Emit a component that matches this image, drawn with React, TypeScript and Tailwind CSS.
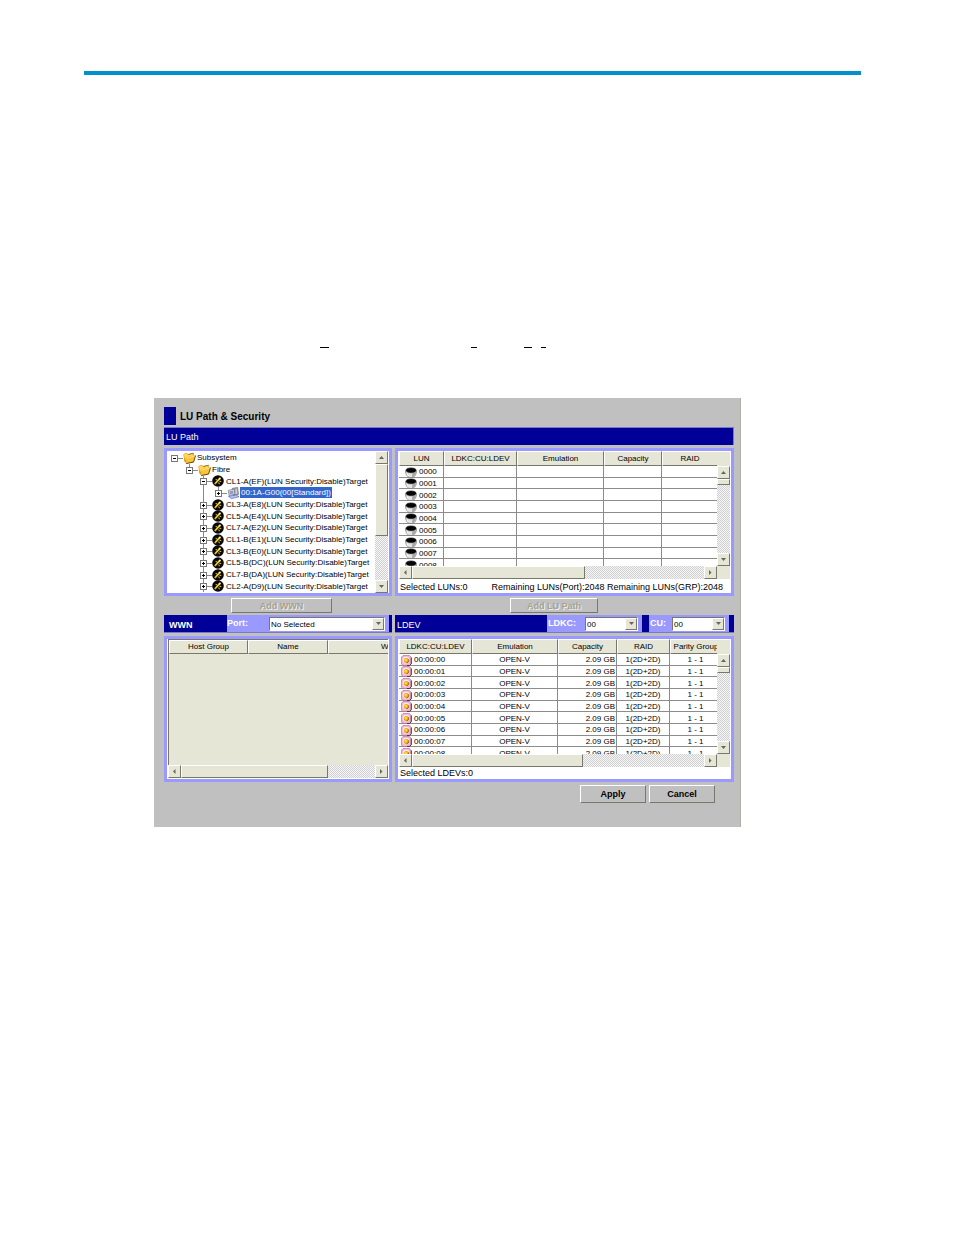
import React from 'react';
import clsx from 'clsx';

type IconKind = 'folder' | 'port' | 'host';

interface TreeNode {
  label: string;
  level: number;
  icon: IconKind;
  open?: boolean;
  selected?: boolean;
}

const ports = ['CL3-A(E8)', 'CL5-A(E4)', 'CL7-A(E2)', 'CL1-B(E1)', 'CL3-B(E0)', 'CL5-B(DC)', 'CL7-B(DA)', 'CL2-A(D9)'];

const tree: TreeNode[] = [
  { label: 'Subsystem', level: 0, icon: 'folder', open: true },
  { label: 'Fibre', level: 1, icon: 'folder', open: true },
  { label: 'CL1-A(EF)(LUN Security:Disable)Target', level: 2, icon: 'port', open: true },
  { label: '00:1A-G00(00[Standard])', level: 3, icon: 'host', selected: true },
  ...ports.map((port): TreeNode => ({
    label: `${port}(LUN Security:Disable)Target`,
    level: 2,
    icon: 'port',
  })),
];

const luns = ['0000', '0001', '0002', '0003', '0004', '0005', '0006', '0007', '0008'];
const ldevs = luns.map((lun) => `00:00:${lun.slice(2)}`);

const indents = ['pl-[3px]', 'pl-[18px]', 'pl-[32px]', 'pl-[47px]'];

const raised = 'border border-t-white border-l-white border-r-[#77776b] border-b-[#77776b] bg-[#e6e6d6]';
const checker = 'bg-[conic-gradient(#d0d0d0_25%,#f6f6f6_0_50%,#d0d0d0_0_75%,#f6f6f6_0)] bg-[length:2px_2px]';
const th = 'border border-t-white border-l-white border-r-[#77776b] border-b-[#77776b] bg-[#e6e6d6] p-0 text-center font-normal leading-[10px] whitespace-nowrap';
const td = 'border-r border-b border-[#8c8c8c] px-0 pt-[2px] pb-0 leading-[8px] whitespace-nowrap';

function FolderIcon() {
  return (
    <svg width="13" height="12" viewBox="0 0 13 12" className="shrink-0 overflow-visible">
      <path d="M.4 2.2 3.6.8l1.6 1.4L10.6.9l.9 3-1 6.6-7.3 1.1L1.2 9z" fill="#d99a1c" />
      <path d="M.8 2.6 3.6 1.4l1.5 1.4 5-1.2.5 1.8-7.4 2-1 3z" fill="#ffd65a" />
      <path d="m3 5.8 9.4-2.5-1.9 6.5-7.2 1.6z" fill="#f9c437" />
      <path d="m3.4 6.2 8.2-2.2" stroke="#fff0a0" strokeWidth=".8" />
      <path d="m3.2 11.6 7.4-1.6 2-6.5" fill="none" stroke="#5a3a04" strokeWidth=".9" />
      <path d="M5.2 2.5 10.5 1.2" stroke="#6b4706" strokeWidth=".7" />
    </svg>
  );
}

function PortIcon() {
  return (
    <svg width="12" height="12" viewBox="0 0 12 12" className="shrink-0 overflow-visible">
      <circle cx="6" cy="6" r="5.8" fill="#080808" />
      <path d="m3 8.8 4.6-5.2" stroke="#f3d12c" strokeWidth="1.7" fill="none" />
      <path d="m7.4 6.2 1.8.3M6.8 7.4l.5 1.8M3.6 4.4l1.3.4" stroke="#f3d12c" strokeWidth="1" fill="none" />
      <circle cx="7.9" cy="3.4" r="1" fill="#fff4b4" />
      <circle cx="3.3" cy="8.6" r=".8" fill="#e4a91c" />
    </svg>
  );
}

function HostIcon() {
  return (
    <svg width="13" height="12" viewBox="0 0 13 12" className="shrink-0 overflow-visible">
      <path d="M5.2 1.4 10.6.4l.9 7-4.6 1.4z" fill="#a7a9b4" stroke="#5b5d6a" strokeWidth=".6" />
      <path d="m1.2 3.4 6-1.3.7 5.2-5.8 1.1z" fill="#e3e5ee" stroke="#5b5d6a" strokeWidth=".6" />
      <path d="m2.3 4.3 4-.8.4 3-3.8.7z" fill="#8f9ccb" />
      <path d="m1.4 9.3 8-1.4 2.6 1.9-7.6 1.8z" fill="#b9c3ea" stroke="#3c55b4" strokeWidth=".6" />
      <path d="M9.2 2.4v4.4" stroke="#fff" strokeWidth=".7" />
    </svg>
  );
}

function LunIcon() {
  return (
    <svg width="12" height="11" viewBox="0 0 12 11" className="-my-[2px] shrink-0">
      <path d="M.5 3.4c0 4 1.8 7.2 5.5 7.2s5.5-3.2 5.5-7.2z" fill="#e4e4e4" stroke="#6a6a6a" strokeWidth=".7" />
      <path d="M7.4 6.2 7 10.3c2.4-.5 3.8-2.9 4-5.8z" fill="#a6a6a6" />
      <ellipse cx="6" cy="3.3" rx="5.6" ry="3" fill="#8f8f8f" />
      <ellipse cx="6.1" cy="3.3" rx="4.9" ry="2.4" fill="#050505" />
      <path d="M2 6.6c.4 1.3 1 2.2 1.8 2.8" fill="none" stroke="#fff" strokeWidth=".9" />
    </svg>
  );
}

function LdevIcon() {
  return (
    <svg width="11" height="11" viewBox="0 0 11 11" className="-my-[2px] shrink-0">
      <path d="M2 .5h6.4l1.8 1.8v6.6l-1.8 1.7H2L.5 9V2z" fill="#f0b6d0" stroke="#a06a8a" strokeWidth=".6" />
      <path d="M10.3 2.6v6.2l-1.8 1.7H6" fill="none" stroke="#43263c" strokeWidth=".9" />
      <circle cx="5.1" cy="5.2" r="3.4" fill="#fdeaf1" />
      <circle cx="5.3" cy="5.5" r="2.5" fill="#eb9a14" />
      <circle cx="4.9" cy="5" r="1.5" fill="#ffd83e" />
      <path d="M7.6 4.4c.5 1.6-.2 3.2-2 3.7" fill="none" stroke="#7a3c10" strokeWidth=".7" />
    </svg>
  );
}

function TreeIcon({ kind }: { kind: IconKind }) {
  if (kind === 'folder') return <FolderIcon />;
  if (kind === 'port') return <PortIcon />;
  return <HostIcon />;
}

function Expander({ node }: { node: TreeNode }) {
  return (
    <button type="button" aria-label={node.open ? 'Collapse' : 'Expand'} className="shrink-0">
      <svg width="12" height="12" viewBox="0 0 12 12" className="block overflow-visible" shapeRendering="crispEdges">
        <g stroke="#8a8a8a" fill="none">
          {node.level > 0 && <path d="M3.5 0v3" />}
          {node.level === 2 && <path d="M3.5 9v3" />}
          {node.level === 3 && <path d="M-11.5 0v12" />}
          <path d="M7 6.5h5" />
        </g>
        <rect x=".5" y="3.5" width="6" height="6" fill="#fff" stroke="#777" />
        <path d={node.open ? 'M2 6.5h3' : 'M2 6.5h3M3.5 5v3'} stroke="#000" />
      </svg>
    </button>
  );
}

const arrows = {
  up: 'M1 4 3.5 1 6 4z',
  down: 'M1 1h5L3.5 4z',
  left: 'M4.5 0v5L2 2.5z',
  right: 'M2 0v5l2.5-2.5z',
};

function ScrollButton({ dir }: { dir: keyof typeof arrows }) {
  return (
    <button type="button" aria-label={`Scroll ${dir}`} className={clsx('flex size-[13px] shrink-0 items-center justify-center', raised)}>
      <svg width="7" height="5" viewBox="0 0 7 5">
        <path d={arrows[dir]} fill="#66665c" />
      </svg>
    </button>
  );
}

function VScroll({ thumb }: { thumb: string }) {
  return (
    <div className={clsx('flex w-[13px] min-h-0 flex-1 flex-col', checker)}>
      <ScrollButton dir="up" />
      <div className="min-h-0 flex-1">
        <div className={clsx(raised, thumb)} />
      </div>
      <ScrollButton dir="down" />
    </div>
  );
}

function HScroll({ thumb }: { thumb: string }) {
  return (
    <div className={clsx('flex h-[13px] min-w-0 flex-1', checker)}>
      <ScrollButton dir="left" />
      <div className="min-w-0 flex-1">
        <div className={clsx('h-full', raised, thumb)} />
      </div>
      <ScrollButton dir="right" />
    </div>
  );
}

// Table with a scroll bar on the right and one below it
function ScrollTable({ thumb, children }: { thumb: string; children: React.ReactNode }) {
  return (
    <div>
      <div className="flex h-[115px]">
        <div className="min-w-0 flex-1 overflow-hidden">{children}</div>
        <div className="flex w-[13px] flex-col">
          <div className="h-[15px] border-t border-white bg-[#e6e6d6]" />
          <VScroll thumb="h-[6px]" />
        </div>
      </div>
      <div className="flex">
        <HScroll thumb={thumb} />
        <div className="w-[13px] bg-[#e6e6d6]" />
      </div>
    </div>
  );
}

function Panel({ children, className }: { children: React.ReactNode; className?: string }) {
  return (
    <section className={clsx('min-w-0 border-[3px] border-[#9999ff] bg-white px-px', className)}>{children}</section>
  );
}

interface SelectFieldProps {
  id: string;
  label: string;
  value: string;
  className: string;
  labelClass: string;
}

function SelectField({ id, label, value, className, labelClass }: SelectFieldProps) {
  return (
    <div className={clsx('flex items-center bg-[#9999ff] pr-[4px]', className)}>
      <label htmlFor={id} className={clsx('shrink-0 pt-px text-[9px] font-bold text-white', labelClass)}>
        {label}
      </label>
      <div className="relative h-[14px] min-w-0 flex-1">
        <select
          id={id}
          defaultValue={value}
          className="block h-full w-full appearance-none border border-t-[#77776b] border-l-[#77776b] border-r-white border-b-white bg-white pt-px pl-px text-[8px] leading-[11px] text-black"
        >
          <option>{value}</option>
        </select>
        <span className={clsx('pointer-events-none absolute top-px right-px flex h-[12px] w-[12px] items-center justify-center', raised)}>
          <svg width="7" height="5" viewBox="0 0 7 5">
            <path d={arrows.down} fill="#66665c" />
          </svg>
        </span>
      </div>
    </div>
  );
}

const actionButton =
  'border border-t-white border-l-white border-r-[#77776b] border-b-[#77776b] bg-[#c0c0c0] text-[9px] font-bold leading-[12px]';

export default function App() {
  return (
    <div className="min-h-screen bg-white pt-[71px] font-['Liberation_Sans',Arial,sans-serif] text-[8px] text-black">
      <div className="mr-[93px] ml-[84px] h-[4px] bg-[#0090cc]" />

      <div className="mt-[272px] flex h-px pl-[320px]">
        <span className="w-[9px] bg-black" />
        <span className="ml-[142px] w-[6px] bg-black" />
        <span className="ml-[47px] w-[8px] bg-black" />
        <span className="ml-[9px] w-[5px] bg-black" />
      </div>

      <main className="mt-[50px] mr-[213px] ml-[154px] border-r border-[#b0b0a8] bg-[#c0c0c0] pt-[9px] pr-[6px] pb-[24px] pl-[10px]">
        <div className="flex h-[18px] items-center gap-[4px]">
          <span className="h-full w-[12px] bg-[#000099]" />
          <h1 className="text-[10px] font-bold">LU Path &amp; Security</h1>
        </div>
        <h2 className="mt-[2px] h-[18px] border-t border-r border-[#7777cc] bg-[#000099] pl-[2px] text-[9px] leading-[18px] text-white">
          LU Path
        </h2>

        <div className="mt-[3px] grid grid-cols-[228fr_339fr] gap-x-[3px]">
          <Panel className="flex">
            <ul className="flex h-[140px] min-w-0 flex-1 flex-col self-center">
              {tree.map((node) => (
                <li key={node.label} className={clsx('flex min-h-0 flex-1 items-center', indents[node.level])}>
                  <Expander node={node} />
                  <TreeIcon kind={node.icon} />
                  <span
                    className={clsx(
                      'px-px pt-px leading-[10px] whitespace-nowrap',
                      node.icon === 'port' && 'ml-px',
                      node.selected && 'bg-[#3366cc] text-white',
                    )}
                  >
                    {node.label}
                  </span>
                </li>
              ))}
            </ul>
            <div className="flex flex-col">
              <VScroll thumb="h-[72px]" />
            </div>
          </Panel>

          <Panel>
            <ScrollTable thumb="w-[173px]">
              <table className="h-[120px] w-full table-fixed border-separate border-spacing-0">
                <colgroup>
                  <col className="w-[45px]" />
                  <col className="w-[73px]" />
                  <col className="w-[87px]" />
                  <col className="w-[58px]" />
                  <col />
                </colgroup>
                <thead>
                  <tr className="h-[15px]">
                    {['LUN', 'LDKC:CU:LDEV', 'Emulation', 'Capacity', 'RAID'].map((name) => (
                      <th key={name} className={clsx(th, 'last:border-r-0')}>{name}</th>
                    ))}
                  </tr>
                </thead>
                <tbody>
                  {luns.map((lun) => (
                    <tr key={lun}>
                      <td className={td}>
                        <div className="flex h-[8px] items-center gap-[2px] pl-[6px]">
                          <LunIcon />
                          {lun}
                        </div>
                      </td>
                      <td className={td} />
                      <td className={td} />
                      <td className={td} />
                      <td className={clsx(td, 'border-r-0')} />
                    </tr>
                  ))}
                </tbody>
              </table>
            </ScrollTable>
            <div className="flex h-[14px] items-center justify-between pt-[3px] pr-[7px] pl-px text-[9px] whitespace-nowrap">
              <span>Selected LUNs:0</span>
              <span>Remaining LUNs(Port):2048 Remaining LUNs(GRP):2048</span>
            </div>
          </Panel>

          <div className="mt-[2px] pl-[67px]">
            <button type="button" disabled className={clsx(actionButton, 'block h-[15px] w-[101px] text-[#a5a190] [text-shadow:1px_1px_0_#eeeeee]')}>
              Add WWN
            </button>
          </div>
          <div className="mt-[2px] pl-[115px]">
            <button type="button" disabled className={clsx(actionButton, 'block h-[15px] w-[88px] text-[#a5a190] [text-shadow:1px_1px_0_#eeeeee]')}>
              Add LU Path
            </button>
          </div>

          <div className="mt-[2px] flex h-[18px] border-b border-[#7777cc] bg-[#000099] pr-[3px]">
            <h2 className="w-[63px] pl-[5px] text-[9px] leading-[20px] font-bold text-white">WWN</h2>
            <SelectField id="port" label="Port:" value="No Selected" className="flex-1" labelClass="w-[42px]" />
          </div>
          <div className="mt-[2px] flex h-[18px] border-b border-[#7777cc] bg-[#000099] pr-[5px]">
            <h2 className="flex-1 pl-[2px] text-[9px] leading-[20px] text-white">LDEV</h2>
            <SelectField id="ldkc" label="LDKC:" value="00" className="w-[95px]" labelClass="w-[38px] pl-px" />
            <SelectField id="cu" label="CU:" value="00" className="ml-[7px] w-[80px]" labelClass="w-[23px] pl-px" />
          </div>

          <Panel className="mt-[3px] flex flex-col pb-px">
            <div className="flex-1 overflow-hidden border-t border-l border-[#77776b] bg-[#e6e6d6]">
              <table className="w-[286px] table-fixed border-separate border-spacing-0">
                <thead>
                  <tr className="h-[14px]">
                    <th className={clsx(th, 'w-[79px]')}>Host Group</th>
                    <th className={clsx(th, 'w-[80px]')}>Name</th>
                    <th className={th}>WWN</th>
                  </tr>
                </thead>
              </table>
            </div>
            <div className="flex">
              <HScroll thumb="w-[147px]" />
            </div>
          </Panel>

          <Panel className="mt-[3px]">
            <ScrollTable thumb="w-[171px]">
              <table className="h-[120px] w-[calc(100%+5px)] table-fixed border-separate border-spacing-0">
                <colgroup>
                  <col className="w-[73px]" />
                  <col className="w-[86px]" />
                  <col className="w-[59px]" />
                  <col className="w-[53px]" />
                  <col />
                </colgroup>
                <thead>
                  <tr className="h-[15px]">
                    {['LDKC:CU:LDEV', 'Emulation', 'Capacity', 'RAID', 'Parity Group'].map((name) => (
                      <th key={name} className={th}>{name}</th>
                    ))}
                  </tr>
                </thead>
                <tbody>
                  {ldevs.map((ldev) => (
                    <tr key={ldev}>
                      <td className={td}>
                        <div className="flex h-[8px] items-center gap-[2px] pl-[2px]">
                          <LdevIcon />
                          {ldev}
                        </div>
                      </td>
                      <td className={clsx(td, 'text-center')}>OPEN-V</td>
                      <td className={clsx(td, 'pr-px text-right')}>2.09 GB</td>
                      <td className={clsx(td, 'text-center')}>1(2D+2D)</td>
                      <td className={clsx(td, 'text-center')}>1 - 1</td>
                    </tr>
                  ))}
                </tbody>
              </table>
            </ScrollTable>
            <div className="flex h-[12px] items-center pt-px pl-px text-[9px]">Selected LDEVs:0</div>
          </Panel>
        </div>

        <div className="mt-[3px] flex justify-end gap-[3px] pr-[19px]">
          <button type="button" className={clsx(actionButton, 'h-[18px] w-[66px]')}>Apply</button>
          <button type="button" className={clsx(actionButton, 'h-[18px] w-[66px]')}>Cancel</button>
        </div>
      </main>
    </div>
  );
}
